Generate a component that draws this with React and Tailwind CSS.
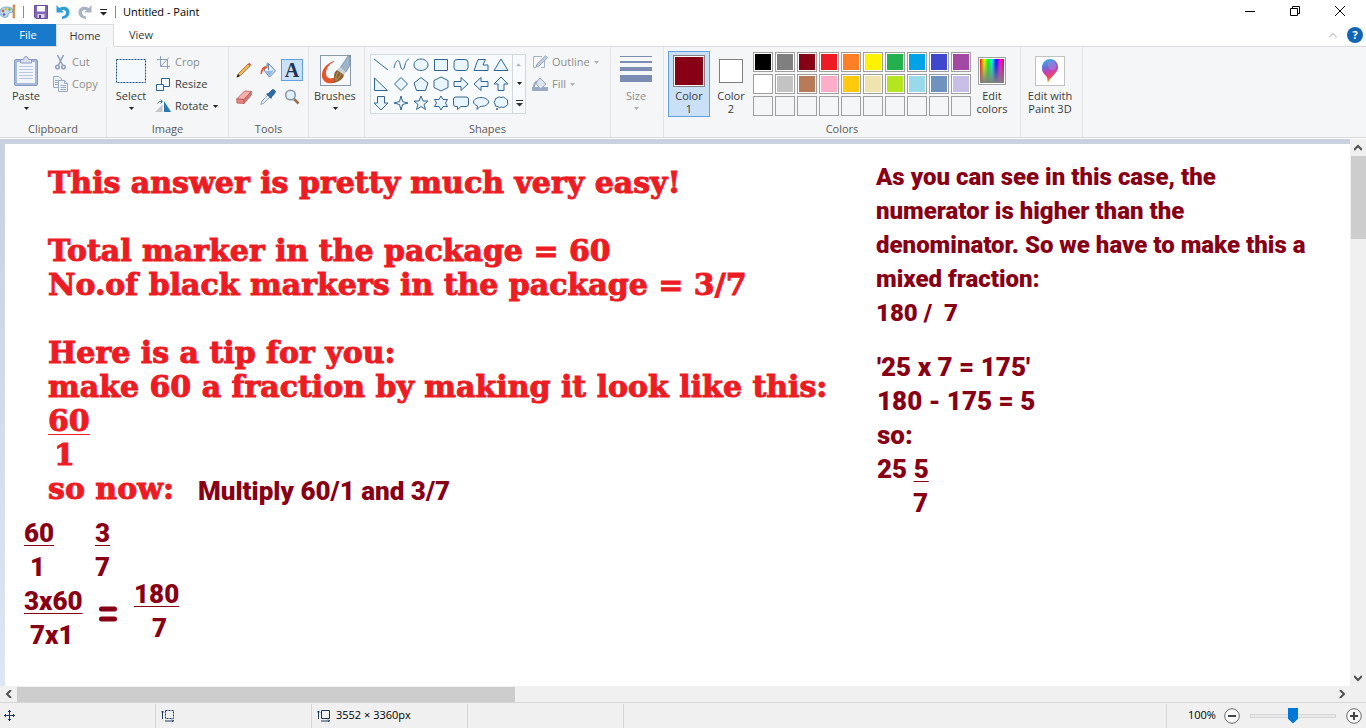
import { useState } from 'react';

const paletteRows = [
  [
    { name: 'Black', cls: 'bg-black' },
    { name: 'Gray-50%', cls: 'bg-[#7f7f7f]' },
    { name: 'Dark red', cls: 'bg-[#880015]' },
    { name: 'Red', cls: 'bg-[#ed1c24]' },
    { name: 'Orange', cls: 'bg-[#ff7f27]' },
    { name: 'Yellow', cls: 'bg-[#fff200]' },
    { name: 'Green', cls: 'bg-[#22b14c]' },
    { name: 'Turquoise', cls: 'bg-[#00a2e8]' },
    { name: 'Indigo', cls: 'bg-[#3f48cc]' },
    { name: 'Purple', cls: 'bg-[#a349a4]' }
  ],
  [
    { name: 'White', cls: 'bg-white' },
    { name: 'Gray-25%', cls: 'bg-[#c3c3c3]' },
    { name: 'Brown', cls: 'bg-[#b97a57]' },
    { name: 'Rose', cls: 'bg-[#ffaec9]' },
    { name: 'Gold', cls: 'bg-[#ffc90e]' },
    { name: 'Light yellow', cls: 'bg-[#efe4b0]' },
    { name: 'Lime', cls: 'bg-[#b5e61d]' },
    { name: 'Light turquoise', cls: 'bg-[#99d9ea]' },
    { name: 'Blue-gray', cls: 'bg-[#7092be]' },
    { name: 'Lavender', cls: 'bg-[#c8bfe7]' }
  ]
];

const shapes = [
  { name: 'Line', d: 'M1 2 L15 13' },
  { name: 'Curve', d: 'M1 11 C3 2 6 2 7 7 C8 14 11 14 12 8 C13 4 14 3 16 2' },
  { name: 'Oval', d: 'M8 2 C12 2 15 4.500 15 8 C15 11 12 13.500 8 13.500 C4 13.500 1 11 1 8 C1 4.500 4 2 8 2 Z' },
  { name: 'Rectangle', d: 'M1.500 2.500 H14.500 V13.500 H1.500 Z' },
  { name: 'Rounded rectangle', d: 'M4 2.500 H12 Q15 2.500 15 5.500 V10.500 Q15 13.500 12 13.500 H4 Q1 13.500 1 10.500 V5.500 Q1 2.500 4 2.500 Z' },
  { name: 'Polygon', d: 'M5 2.500 H12.500 L10 8 H15 V13.500 H1 Z' },
  { name: 'Triangle', d: 'M8 2 L15 13.500 H1 Z' },
  { name: 'Right triangle', d: 'M1.500 2 V14.500 H14.500 Z' },
  { name: 'Diamond', d: 'M8 1.500 L14.500 8 L8 14.500 L1.500 8 Z' },
  { name: 'Pentagon', d: 'M8 1.500 L15 7 L12.500 14.500 H3.500 L1 7 Z' },
  { name: 'Hexagon', d: 'M8 1 L15 4.500 V11.500 L8 15 L1 11.500 V4.500 Z' },
  { name: 'Right arrow', d: 'M1 5.500 H8 V1.500 L15 8 L8 14.500 V10.500 H1 Z' },
  { name: 'Left arrow', d: 'M15 5.500 H8 V1.500 L1 8 L8 14.500 V10.500 H15 Z' },
  { name: 'Up arrow', d: 'M8 1 L15 8 H11 V14.500 H5 V8 H1 Z' },
  { name: 'Down arrow', d: 'M8 15 L15 8 H11.500 V1.500 H4.500 V8 H1 Z' },
  { name: 'Four-point star', d: 'M8 1 L9.500 6.500 L15 8 L9.500 9.500 L8 15 L6.500 9.500 L1 8 L6.500 6.500 Z' },
  { name: 'Five-point star', d: 'M8 1 L10 6 H15 L11 9.500 L12.500 14.500 L8 11.500 L3.500 14.500 L5 9.500 L1 6 H6 Z' },
  { name: 'Six-point star', d: 'M8 1 L10 4.500 H14.500 L12.500 8 L14.500 11.500 H10 L8 15 L6 11.500 H1.500 L3.500 8 L1.500 4.500 H6 Z' },
  { name: 'Rounded callout', d: 'M3 2 H13 Q15.500 2 15.500 4 V9 Q15.500 11.500 13 11.500 H8 L4.500 14.500 V11.500 H3 Q.500 11.500 .500 9 V4 Q.500 2 3 2 Z' },
  { name: 'Oval callout', d: 'M8 2.500 C12 2.500 15.500 4.500 15.500 7 C15.500 10 11 11.500 7 11.500 L4 14.500 L4.500 11 C2 10 .500 8.500 .500 7 C.500 4.500 4 2.500 8 2.500 Z' },
  { name: 'Cloud callout', d: 'M4 3 Q6 1 8 2.500 Q11 1 12.500 3.500 Q15.500 4.500 14.500 7 Q16 10 13 11 Q11 13.500 8.500 12 Q6 13.500 5 11.500 Q1.500 12 2 9 Q0 7 2 5.500 Q2 3 4 3 Z M3.500 13.500 h1 v1 h-1 Z' }
];

const Arrow = ({ dim }) => (
  <svg className={dim ? 'h-[3px] w-[5px] text-[#b0b0b0]' : 'h-[3px] w-[5px] text-[#222222]'} viewBox="0 0 5 3" aria-hidden="true">
    <path d="M0 0 H5 L2.500 3 Z" fill="currentColor" />
  </svg>
);

const Group = ({ label, width, children }) => (
  <section className={`flex shrink-0 flex-col border-r border-[#e2e3e4] pt-1 ${width}`}>
    <div className="flex h-[66px]">{children}</div>
    <h2 className="pt-1 text-center leading-4 text-[#5a5a5a]">{label}</h2>
  </section>
);

const BigButton = ({ icon, lines, arrow, dim, active, width }) => (
  <button
    type="button"
    className={`flex h-[66px] shrink-0 flex-col items-center border ${width} ${
      active ? 'border-[#62a2e4] bg-[#c9e0f7]' : 'border-transparent'
    } ${dim ? 'text-[#8d8d8d]' : 'text-[#3b3b3b]'}`}
  >
    <span className="flex h-[37px] items-center justify-center">{icon}</span>
    {lines.map((line) => (
      <span key={line} className="whitespace-nowrap leading-[13px]">{line}</span>
    ))}
    {arrow && (
      <span className="flex h-[13px] items-center">
        <Arrow dim={dim} />
      </span>
    )}
  </button>
);

const SmallButton = ({ icon, label, arrow, dim }) => (
  <button
    type="button"
    className={`flex h-[22px] items-center gap-1 whitespace-nowrap ${dim ? 'text-[#8d8d8d]' : 'text-[#3b3b3b]'}`}
  >
    <span className="flex w-4 justify-center">{icon}</span>
    {label}
    {arrow && <Arrow dim={dim} />}
  </button>
);

const PaintIcon = () => (
  <svg className="h-4 w-4" viewBox="0 0 16 16">
    <path d="M6 3 C2 3 -1 6 0 10 C1 13 5 14 7 13 C9 12 7 10 9 9 C11 8 13 9 13 7 C13 4 10 3 6 3 Z" fill="#b9ddf3" stroke="#5b9bc8" strokeWidth=".8" />
    <circle cx="3" cy="7" r="1.400" fill="#ef5a3c" />
    <circle cx="6" cy="5" r="1.300" fill="#f7b52c" />
    <circle cx="9.500" cy="5.500" r="1.200" fill="#5fb04a" />
    <circle cx="4" cy="10.500" r="1.300" fill="#7a55b5" />
    <path d="M13 1 H15 L14.500 8 V14 H13 V8 Z" fill="#e8a25a" stroke="#b5682a" strokeWidth=".6" />
  </svg>
);

const SaveIcon = () => (
  <svg className="h-[14px] w-[14px]" viewBox="0 0 14 14">
    <path d="M.500 .500 H13.500 V13.500 H2 L.500 12 Z" fill="#8467b4" stroke="#6a4c9f" />
    <path d="M3 1 H11 V6.500 H3 Z" fill="#fff" />
    <path d="M3.500 9 H10.500 V13 H3.500 Z" fill="#d9d2e8" />
    <path d="M5 10 H7 V13 H5 Z" fill="#59418a" />
  </svg>
);

const UndoIcon = ({ cls }) => (
  <svg className={`h-[14px] w-[14px] ${cls}`} viewBox="0 0 14 14">
    <path d="M.500 0 V7.500 H8 L5.500 5.300 C8 4.200 10.300 5.500 10 8 C9.800 10 8.500 11 6 11.500 V14 C10.500 13.500 13.500 11 13.500 7.500 C13.500 2 8 .300 3.200 3 Z" fill="currentColor" />
  </svg>
);

const PasteIcon = () => (
  <svg className="h-8 w-[26px]" viewBox="0 0 26 32">
    <rect x="1.500" y="4.500" width="23" height="26" rx="1.500" fill="#a9b9d8" stroke="#8498c2" />
    <rect x="4" y="7" width="18" height="21" fill="#f0f4fb" />
    <path d="M6 11.500 H20 M6 14.500 H20 M6 17.500 H20 M6 20.500 H20 M6 23.500 H20" stroke="#bac8e0" />
    <path d="M7.500 8 V4.500 H10.500 Q11 1.500 13 1.500 Q15 1.500 15.500 4.500 H18.500 V8 Z" fill="#d7dfec" stroke="#8a9cc0" />
  </svg>
);

const CutIcon = () => (
  <svg className="h-[15px] w-[11px]" viewBox="0 0 11 15" fill="none" stroke="#8e9ebf" strokeWidth="1.500">
    <path d="M2.500 0 L7.500 10 M8.500 0 L3.500 10" />
    <circle cx="2.500" cy="12" r="1.800" />
    <circle cx="8.500" cy="12" r="1.800" />
  </svg>
);

const CopyIcon = () => (
  <svg className="h-4 w-[15px]" viewBox="0 0 15 16" fill="#eef2f9" stroke="#9babc8">
    <path d="M.500 .500 H6 L8.500 3 V11.500 H.500 Z M2 4.500 H7 M2 6.500 H7 M2 8.500 H7" />
    <path d="M5.500 4.500 H11.500 L14.500 7.500 V15.500 H5.500 Z M7.500 9.500 H13 M7.500 11.500 H13 M7.500 13.500 H13 M11.500 4.500 V7.500 H14.500" />
  </svg>
);

const SelectIcon = () => (
  <svg className="h-6 w-[30px]" viewBox="0 0 30 24">
    <rect x=".500" y=".500" width="29" height="23" fill="#f4f9fe" stroke="#1f5080" strokeDasharray="2 1" />
  </svg>
);

const CropIcon = () => (
  <svg className="h-[13px] w-[13px]" viewBox="0 0 13 13" fill="none" stroke="#8e9eb8">
    <path d="M3.500 0 V10.500 H13 M0 3.500 H10.500 V13 M4 10 L12 1.500" />
  </svg>
);

const ResizeIcon = () => (
  <svg className="h-[13px] w-[14px]" viewBox="0 0 14 13" fill="#f5faff" stroke="#2b6593">
    <path d="M5.500 .500 H13.500 V8.500 H5.500 Z" />
    <path d="M.500 6.500 H7.500 V12.500 H.500 Z" />
  </svg>
);

const RotateIcon = () => (
  <svg className="h-[14px] w-4" viewBox="0 0 16 14">
    <path d="M0 13 L7.500 5.500 V13 Z" fill="#c3c7cc" />
    <path d="M9 2 L16 13 H9 Z" fill="#2a78b5" />
    <path d="M2.500 4.500 Q4 1.500 7 2.500 M5.500 .500 L7.500 2.500 L5.500 4.500" fill="none" stroke="#3c79a8" />
  </svg>
);

const PencilIcon = () => (
  <svg className="h-4 w-4" viewBox="0 0 16 16">
    <path d="M1 15 L2.500 11.500 L12 2 L14 4 L4.500 13.500 Z" fill="#f1b750" stroke="#a5692b" strokeWidth=".8" />
    <path d="M12 2 L13.300 .700 L15.300 2.700 L14 4 Z" fill="#ce5449" />
    <path d="M.500 15.500 L2 12 L4 14 Z" fill="#222" />
  </svg>
);

const FillToolIcon = () => (
  <svg className="h-4 w-4" viewBox="0 0 16 16">
    <path d="M9 2 L15.500 9 L9.500 15 L4 8 Z" fill="#e6f0fa" stroke="#5a7ea8" />
    <path d="M6 9 L14 8.500 L9.500 14 Z" fill="#8db9e4" />
    <path d="M8.500 8 V1.500 Q8 .500 7 1.500 V4" fill="none" stroke="#6580a0" />
    <path d="M6.500 4 Q1 4 .500 12 Q2 13 2.500 10 Q3 7 7 6 Z" fill="#e3562d" />
  </svg>
);

const EraserIcon = () => (
  <svg className="h-4 w-4" viewBox="0 0 16 16" stroke="#b65a5a" strokeWidth=".8">
    <path d="M.700 10 L8.500 2 L15.300 2.500 L8 10.500 Z" fill="#f6b3ae" />
    <path d="M.700 10 L8 10.500 V14.500 L1 14 Z" fill="#e8857f" />
    <path d="M8 10.500 L15.300 2.500 V6 L8 14.500 Z" fill="#d97670" />
  </svg>
);

const PickerIcon = () => (
  <svg className="h-4 w-4" viewBox="0 0 16 16">
    <path d="M.800 15.500 L2 12 L8 6 L10 8 L4 14 Z" fill="#e3eef7" stroke="#7793ad" strokeWidth=".8" />
    <path d="M6.500 5 L8.500 4.300 L12 .800 Q14 0 15.300 2 Q16 3.500 12 7.500 L11 9.500 Z" fill="#2c6aa8" stroke="#1e4a7a" strokeWidth=".6" />
  </svg>
);

const MagnifierIcon = () => (
  <svg className="h-4 w-4" viewBox="0 0 16 16">
    <path d="M10 10 L14.500 14.500" stroke="#9a6d4c" strokeWidth="2.500" />
    <circle cx="6.500" cy="6" r="4.800" fill="#dff0fb" stroke="#8c959f" strokeWidth="1.500" />
  </svg>
);

const BrushIcon = () => (
  <svg className="h-[31px] w-[31px]" viewBox="0 0 31 31">
    <rect x=".500" y=".500" width="30" height="30" fill="#f6f9fc" stroke="#8a98a8" />
    <path d="M14 6 C5 9 1 16 2 22 C4 29 11 30 18 26 L15 22 C10 25 6 23 6 18 C6.500 13 9 9 14 7 Z" fill="#e4552b" />
    <path d="M20 13 L28 1 H30 V10 L26 17 Z" fill="#9db4cb" stroke="#6d87a3" strokeWidth=".7" />
    <path d="M20 12 L26 17 L24 20 L17 15 Z" fill="#c9d0d8" />
    <path d="M17 15 L24 20 Q23 26 13 28 Q15 25 14 21 Q14 17 17 15 Z" fill="#8a6135" />
    <path d="M18 17 Q15 21 16 26 M21 19 Q20 22 17 25" fill="none" stroke="#c2935c" />
  </svg>
);

const OutlineIcon = () => (
  <svg className="h-[14px] w-4" viewBox="0 0 16 14">
    <path d="M10 1.500 H1.500 V12.500 H4 M12.500 6 V12.500 H9" fill="none" stroke="#a6b2c4" />
    <path d="M4 12 L5 9 L13.500 .800 L15.500 2.800 L7 11 Z" fill="#c6cfdd" stroke="#98a4b8" />
  </svg>
);

const FillIcon = () => (
  <svg className="h-[14px] w-4" viewBox="0 0 16 14">
    <path d="M0 10 H16 V14 H0 Z" fill="#9aa9c4" />
    <path d="M8 1 L14 7 L8.500 12 L3.500 6 Z" fill="#dde4ee" stroke="#98a4b8" />
    <path d="M6 3.500 Q1 4 1 10 H3 Q3 7 5 6 Z" fill="#9aa9c4" />
  </svg>
);

const Paint3DIcon = () => (
  <svg className="h-[30px] w-[30px]" viewBox="0 0 30 30">
    <defs>
      <linearGradient id="pinFill" x1="0" y1="0" x2=".300" y2="1">
        <stop offset="0" stopColor="#35c5ea" />
        <stop offset=".350" stopColor="#6474d8" />
        <stop offset=".600" stopColor="#c93fb0" />
        <stop offset=".820" stopColor="#ee4763" />
        <stop offset="1" stopColor="#f7b42c" />
      </linearGradient>
    </defs>
    <rect x=".500" y=".500" width="29" height="29" fill="#fff" stroke="#c2c2c2" />
    <path d="M15 3 C20 3 23.500 7 23 12 C22.500 17 16 20 13 27 C12 24 13 22 11 20 C7.500 17 6.500 14 7 10.500 C7.500 6 11 3 15 3 Z" fill="url(#pinFill)" />
    <path d="M15 5 C19 4 22 8 21 12 C19 16 15 15 13 11 C12 8 13 6 15 5 Z" fill="#a08be8" opacity=".5" />
  </svg>
);

const CanvasSizeIcon = ({ dashed }) => (
  <svg className="h-3 w-[13px]" viewBox="0 0 13 12" fill="none" stroke="#1f3a5c">
    <path d="M1.500 9 V1 M0 2.500 L1.500 1 L3 2.500 M4 11 H12.500 M11 9.500 L12.500 11 L11 12" />
    <path d="M4.500 .500 H12.500 V8.500 H4.500 Z" strokeDasharray={dashed ? '2 1' : undefined} />
  </svg>
);

const Chevron = ({ d }) => (
  <svg className="h-2 w-2" viewBox="0 0 8 8" fill="none" stroke="#505050" strokeWidth="2">
    <path d={d} />
  </svg>
);

const TitleBar = () => (
  <header className="flex h-6 shrink-0 items-center bg-white">
    <PaintIcon />
    <span className="ml-[7px] h-3 w-px bg-[#8a8a8a]"></span>
    <div className="ml-[10px] flex items-center gap-2">
      <button type="button" aria-label="Save"><SaveIcon /></button>
      <button type="button" aria-label="Undo"><UndoIcon cls="text-[#2f9fd8]" /></button>
      <button type="button" aria-label="Redo"><UndoIcon cls="-scale-x-100 text-[#aab4c2]" /></button>
      <button type="button" aria-label="Customize Quick Access Toolbar">
        <svg className="h-[7px] w-[7px]" viewBox="0 0 7 7"><path d="M0 0 H7 V1 H0 Z M0 3 H7 L3.500 6.500 Z" fill="#222" /></svg>
      </button>
    </div>
    <span className="ml-2 h-3 w-px bg-[#8a8a8a]"></span>
    <h1 className="ml-[7px] text-black">Untitled - Paint</h1>
    <div className="ml-auto flex pb-0.5 pr-1 text-black">
      <button type="button" aria-label="Minimize" className="flex h-[22px] w-[45px] items-center justify-center">
        <svg className="h-[10px] w-[10px]" viewBox="0 0 10 10" stroke="currentColor"><path d="M0 5.500 H10" /></svg>
      </button>
      <button type="button" aria-label="Restore Down" className="flex h-[22px] w-[45px] items-center justify-center">
        <svg className="h-[10px] w-[10px]" viewBox="0 0 10 10" fill="none" stroke="currentColor"><path d="M.500 2.500 H7.500 V9.500 H.500 Z M2.500 2.500 V.500 H9.500 V7.500 H7.500" /></svg>
      </button>
      <button type="button" aria-label="Close" className="flex h-[22px] w-[45px] items-center justify-center">
        <svg className="h-[10px] w-[10px]" viewBox="0 0 10 10" stroke="currentColor"><path d="M0 0 L10 10 M10 0 L0 10" /></svg>
      </button>
    </div>
  </header>
);

const Tabs = () => (
  <nav className="flex h-[23px] shrink-0 items-stretch border-b border-[#dadbdc] bg-white text-[#3b3b3b]">
    <button type="button" className="w-14 bg-[#1979ca] text-white">File</button>
    <button type="button" className="-mb-px w-[58px] border-x border-t border-[#dadbdc] bg-[#f5f6f7]">Home</button>
    <button type="button" className="w-[54px]">View</button>
    <div className="ml-auto flex items-center gap-[10px] pr-[3px]">
      <button type="button" aria-label="Minimize the Ribbon">
        <svg className="h-[5px] w-2" viewBox="0 0 8 5" fill="none" stroke="#a0a0a0"><path d="M0 4.500 L4 .500 L8 4.500" /></svg>
      </button>
      <button type="button" aria-label="Help" className="h-4 w-4 rounded-full bg-[#1265b5] text-center font-bold leading-4 text-white">?</button>
    </div>
  </nav>
);

const Ribbon = () => (
  <div className="flex h-[91px] shrink-0 border-b border-[#dadbdc] bg-[#f5f6f7]">
    <Group label="Clipboard" width="w-[107px]">
      <BigButton icon={<PasteIcon />} lines={['Paste']} arrow width="w-[52px]" />
      <div>
        <SmallButton icon={<CutIcon />} label="Cut" dim />
        <SmallButton icon={<CopyIcon />} label="Copy" dim />
      </div>
    </Group>
    <Group label="Image" width="w-[122px]">
      <BigButton icon={<SelectIcon />} lines={['Select']} arrow width="w-12" />
      <div>
        <SmallButton icon={<CropIcon />} label="Crop" dim />
        <SmallButton icon={<ResizeIcon />} label="Resize" />
        <SmallButton icon={<RotateIcon />} label="Rotate" arrow />
      </div>
    </Group>
    <Group label="Tools" width="w-20">
      <div className="ml-1 mt-2 grid h-[50px] grid-cols-3 gap-x-0.5 gap-y-1">
        <button type="button" aria-label="Pencil" className="flex h-[22px] w-[22px] items-center justify-center"><PencilIcon /></button>
        <button type="button" aria-label="Fill with color" className="flex h-[22px] w-[22px] items-center justify-center"><FillToolIcon /></button>
        <button type="button" className="h-[22px] w-[22px] border border-[#62a2e4] bg-[#c9e0f7] text-center font-['Liberation_Serif',serif] text-[20px] font-bold leading-5 text-[#1f3450]">A</button>
        <button type="button" aria-label="Eraser" className="flex h-[22px] w-[22px] items-center justify-center"><EraserIcon /></button>
        <button type="button" aria-label="Color picker" className="flex h-[22px] w-[22px] items-center justify-center"><PickerIcon /></button>
        <button type="button" aria-label="Magnifier" className="flex h-[22px] w-[22px] items-center justify-center"><MagnifierIcon /></button>
      </div>
    </Group>
    <Group label="" width="w-14">
      <BigButton icon={<BrushIcon />} lines={['Brushes']} arrow width="w-[52px]" />
    </Group>
    <Group label="Shapes" width="w-[246px]">
      <div className="ml-[5px] mt-[3px] flex h-[60px] border border-[#d3d8de] bg-[#f8fbfe]">
        <div className="grid grid-cols-7 items-center">
          {shapes.map((shape) => (
            <button key={shape.name} type="button" aria-label={shape.name} className="flex w-5 justify-center">
              <svg className="h-4 w-4" viewBox="0 0 16 16" fill="#e9f5fd" stroke="#35658f">
                <path d={shape.d} fill={shape.name === 'Curve' ? 'none' : undefined} />
              </svg>
            </button>
          ))}
        </div>
        <div className="ml-px flex w-[13px] flex-col border-l border-[#d3d8de]">
          <button type="button" aria-label="Scroll up" className="flex flex-1 rotate-180 items-center justify-center"><Arrow dim /></button>
          <button type="button" aria-label="Scroll down" className="flex flex-1 items-center justify-center"><Arrow /></button>
          <button type="button" aria-label="More shapes" className="flex flex-1 items-center justify-center">
            <svg className="h-[7px] w-[7px]" viewBox="0 0 7 7"><path d="M0 0 H7 V1 H0 Z M0 3 H7 L3.500 6.500 Z" fill="#333" /></svg>
          </button>
        </div>
      </div>
      <div className="ml-[6px]">
        <SmallButton icon={<OutlineIcon />} label="Outline" arrow dim />
        <SmallButton icon={<FillIcon />} label="Fill" arrow dim />
      </div>
    </Group>
    <Group label="" width="w-[53px]">
      <BigButton
        icon={
          <span className="flex w-8 flex-col gap-1 pb-1">
            <span className="h-px bg-[#7b8db2]"></span>
            <span className="h-0.5 bg-[#7b8db2]"></span>
            <span className="h-1 bg-[#7b8db2]"></span>
            <span className="h-[7px] bg-[#7b8db2]"></span>
          </span>
        }
        lines={['Size']}
        arrow
        dim
        width="w-[50px]"
      />
    </Group>
    <Group label="Colors" width="w-[357px]">
      <div className="flex pl-1">
        <BigButton
          icon={<span className="h-8 w-8 border border-[#808080] bg-[#880015] ring-1 ring-inset ring-white"></span>}
          lines={['Color', '1']}
          active
          width="w-[42px]"
        />
        <BigButton
          icon={<span className="h-6 w-6 border border-[#808080] bg-white"></span>}
          lines={['Color', '2']}
          width="w-[42px]"
        />
      </div>
      <div className="ml-px mt-px grid h-16 grid-cols-10 gap-0.5">
        {paletteRows.flat().map((color) => (
          <button
            key={color.name}
            type="button"
            aria-label={color.name}
            className={`h-5 w-5 border border-[#a0a0a0] ring-1 ring-inset ring-white ${color.cls}`}
          ></button>
        ))}
        {Array.from({ length: 10 }, (_, i) => (
          <button key={i} type="button" aria-label={`Custom color ${i + 1}`} className="h-5 w-5 border border-[#a0a0a0]"></button>
        ))}
      </div>
      <BigButton
        icon={
          <span className="h-7 w-7 border border-[#a0a0a0] bg-white p-px">
            <span className="block h-full bg-[linear-gradient(to_bottom,transparent,#808080),linear-gradient(to_right,#f00,#ff0,#0f0,#0ff,#00f,#f0f,#f00)]"></span>
          </span>
        }
        lines={['Edit', 'colors']}
        width="w-[42px]"
      />
    </Group>
    <Group label="" width="w-[62px]">
      <BigButton icon={<Paint3DIcon />} lines={['Edit with', 'Paint 3D']} width="w-[58px]" />
    </Group>
  </div>
);

const redText = "absolute whitespace-pre font-['DejaVu_Serif',serif] text-[30px] font-bold leading-[34px] text-[#ed1c24] [-webkit-text-stroke:1px_#ed1c24]";
const darkText = "absolute whitespace-pre font-['Roboto',sans-serif] font-black leading-[34px] text-[#880015]";
const underline = 'underline decoration-1 underline-offset-3 [text-decoration-skip-ink:none]';

const Drawing = () => (
  <main className="relative h-full overflow-hidden bg-white">
    <div className={`left-[43px] top-[22px] ${redText}`}>
      <p>This answer is pretty much very easy!</p>
      <p className="pt-[34px]">Total marker in the package = 60</p>
      <p>No.of black markers in the package = 3/7</p>
      <p className="pt-[34px]">Here is a tip for you:</p>
      <p>make 60 a fraction by making it look like this:</p>
      <p><span className={underline}>60</span></p>
      <p className="pl-[6px]">1</p>
      <p>so now:</p>
    </div>
    <p className={`left-[193px] top-[330px] text-[26px] ${darkText}`}>Multiply 60/1 and 3/7</p>
    <div className={`left-[19px] top-[372px] text-[26px] ${darkText}`}>
      <p><span className={underline}>60</span></p>
      <p className="pl-[6px]">1</p>
      <p><span className={underline}>3x60</span></p>
      <p className="pl-[6px]">7x1</p>
    </div>
    <div className={`left-[90px] top-[372px] text-[26px] ${darkText}`}>
      <p><span className={underline}>3</span></p>
      <p>7</p>
    </div>
    <svg className="absolute left-[93px] top-[462px] h-4 w-5" viewBox="0 0 20 16" stroke="#880015" strokeWidth="5" strokeLinecap="round">
      <path d="M3.500 3 H16.500 M3.500 13 H16.500" />
    </svg>
    <div className={`left-[129px] top-[433px] text-[26px] ${darkText}`}>
      <p><span className={underline}>180</span></p>
      <p className="pl-[18px]">7</p>
    </div>
    <div className={`left-[871px] top-4 text-[24px] ${darkText}`}>
      <p>As you can see in this case, the</p>
      <p>numerator is higher than the</p>
      <p>denominator. So we have to make this a</p>
      <p>mixed fraction:</p>
      <p>180 /  7</p>
    </div>
    <div className={`left-[872px] top-[206px] text-[26px] ${darkText}`}>
      <p>'25 x 7 = 175'</p>
      <p>180 - 175 = 5</p>
      <p>so:</p>
      <p>25 <span className={underline}>5</span></p>
      <p className="pl-9">7</p>
    </div>
  </main>
);

const StatusBar = () => {
  const [zoom, setZoom] = useState(50);

  return (
    <footer className="flex h-[26px] shrink-0 items-center border-t border-[#d7d7d7] bg-[#f0f0f0] text-black">
      <div className="flex h-6 w-[156px] items-center border-r border-[#d7d7d7] pl-1">
        <svg className="h-[11px] w-[11px]" viewBox="0 0 11 11" fill="none" stroke="#1f3a5c">
          <path d="M5.500 0 V11 M0 5.500 H11 M4 2 L5.500 .500 L7 2 M4 9 L5.500 10.500 L7 9 M2 4 L.500 5.500 L2 7 M9 4 L10.500 5.500 L9 7" />
        </svg>
      </div>
      <div className="flex h-6 w-[156px] items-center border-r border-[#d7d7d7] pl-[5px]"><CanvasSizeIcon dashed /></div>
      <div className="flex h-6 w-[156px] items-center gap-[6px] border-r border-[#d7d7d7] pl-[5px]">
        <CanvasSizeIcon />
        <span>3552 × 3360px</span>
      </div>
      <div className="h-6 w-[156px] border-r border-[#d7d7d7]"></div>
      <div className="ml-auto flex h-6 items-center border-l border-[#d7d7d7] pl-[21px] pr-1">
        <label htmlFor="zoom" className="w-9">100%</label>
        <button type="button" aria-label="Zoom out">
          <svg className="h-4 w-4" viewBox="0 0 16 16" fill="#f8f8f8" stroke="#6b6b6b"><circle cx="8" cy="8" r="7.300" /><path d="M4 8 H12" stroke="#444" strokeWidth="2" /></svg>
        </button>
        <input
          id="zoom"
          type="range"
          value={zoom}
          onChange={(e) => setZoom(e.target.value)}
          className="mx-[10px] h-4 w-[86px] appearance-none bg-transparent [&::-webkit-slider-runnable-track]:h-[4px] [&::-webkit-slider-runnable-track]:border [&::-webkit-slider-runnable-track]:border-[#d6d6d6] [&::-webkit-slider-runnable-track]:bg-[#e7eaea] [&::-webkit-slider-thumb]:-mt-[7px] [&::-webkit-slider-thumb]:h-4 [&::-webkit-slider-thumb]:w-[10px] [&::-webkit-slider-thumb]:appearance-none [&::-webkit-slider-thumb]:bg-[#0078d7] [&::-webkit-slider-thumb]:[clip-path:polygon(0_0,100%_0,100%_70%,50%_100%,0_70%)]"
        />
        <button type="button" aria-label="Zoom in">
          <svg className="h-4 w-4" viewBox="0 0 16 16" fill="#f8f8f8" stroke="#6b6b6b"><circle cx="8" cy="8" r="7.300" /><path d="M4 8 H12 M8 4 V12" stroke="#444" strokeWidth="2" /></svg>
        </button>
      </div>
    </footer>
  );
};

const App = () => (
  <div className="flex h-screen flex-col overflow-hidden font-['Open_Sans',sans-serif] text-[11px]">
    <TitleBar />
    <Tabs />
    <Ribbon />
    <div className="flex min-h-0 flex-1 pt-px">
      <div className="min-w-0 flex-1 bg-linear-to-b from-[#c8d1e0] to-[#dce6f4] pl-[5px] pt-[5px]">
        <Drawing />
      </div>
      <div className="flex w-4 shrink-0 flex-col items-center bg-[#f0f0f0]">
        <button type="button" aria-label="Scroll up" className="flex h-[17px] w-4 items-center justify-center"><Chevron d="M0 6 L4 2 L8 6" /></button>
        <div className="h-[83px] w-[15px] bg-[#cdcdcd]"></div>
        <button type="button" aria-label="Scroll down" className="mt-auto flex h-[17px] w-4 items-center justify-center"><Chevron d="M0 2 L4 6 L8 2" /></button>
      </div>
    </div>
    <div className="flex h-4 shrink-0 items-center bg-[#f0f0f0] pr-4">
      <button type="button" aria-label="Scroll left" className="flex h-4 w-[17px] items-center justify-center"><Chevron d="M6 0 L2 4 L6 8" /></button>
      <div className="h-[15px] w-[498px] bg-[#cdcdcd]"></div>
      <button type="button" aria-label="Scroll right" className="ml-auto flex h-4 w-[17px] items-center justify-center"><Chevron d="M2 0 L6 4 L2 8" /></button>
    </div>
    <StatusBar />
  </div>
);

export default App;
